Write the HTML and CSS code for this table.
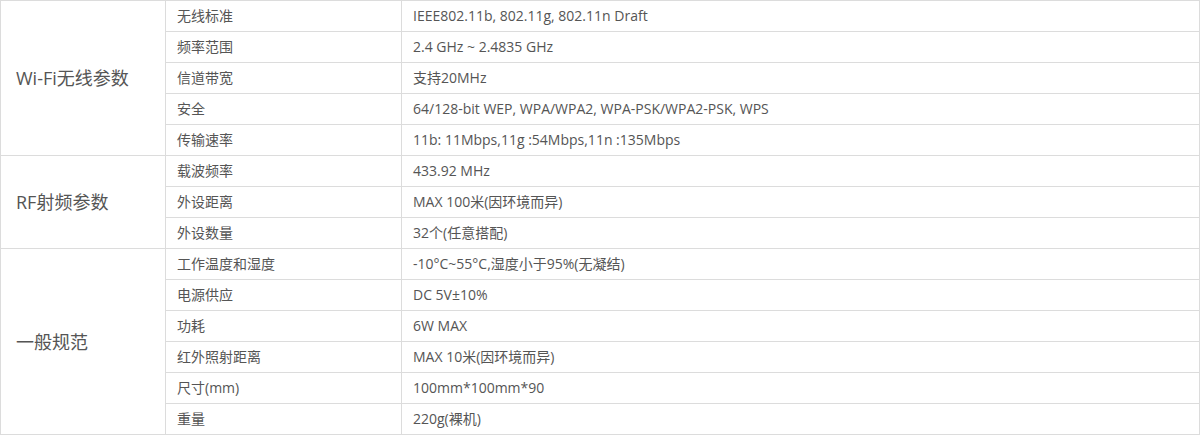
FILE: index.html
```html
<!DOCTYPE html>
<html lang="zh-CN">
<head>
<meta charset="utf-8">
<title>规格参数</title>
<link rel="stylesheet" href="styles.css">
</head>
<body>
<table class="spec">
  <colgroup>
    <col class="c-group">
    <col class="c-name">
    <col class="c-value">
  </colgroup>
  <tbody>
    <tr><td class="group" rowspan="5">Wi-Fi无线参数</td><td>无线标准</td><td>IEEE802.11b, 802.11g, 802.11n Draft</td></tr>
    <tr><td>频率范围</td><td>2.4 GHz ~ 2.4835 GHz</td></tr>
    <tr><td>信道带宽</td><td>支持20MHz</td></tr>
    <tr><td>安全</td><td>64/128-bit WEP, WPA/WPA2, WPA-PSK/WPA2-PSK, WPS</td></tr>
    <tr><td>传输速率</td><td>11b: 11Mbps,11g :54Mbps,11n :135Mbps</td></tr>
    <tr><td class="group" rowspan="3">RF射频参数</td><td>载波频率</td><td>433.92 MHz</td></tr>
    <tr><td>外设距离</td><td>MAX 100米(因环境而异)</td></tr>
    <tr><td>外设数量</td><td>32个(任意搭配)</td></tr>
    <tr><td class="group" rowspan="6">一般规范</td><td>工作温度和湿度</td><td>-10°C~55°C,湿度小于95%(无凝结)</td></tr>
    <tr><td>电源供应</td><td>DC 5V±10%</td></tr>
    <tr><td>功耗</td><td>6W MAX</td></tr>
    <tr><td>红外照射距离</td><td>MAX 10米(因环境而异)</td></tr>
    <tr><td>尺寸(mm)</td><td>100mm*100mm*90</td></tr>
    <tr><td>重量</td><td>220g(裸机)</td></tr>
  </tbody>
</table>
</body>
</html>
```

FILE: styles.css
```css
html, body {
  margin: 0;
  padding: 0;
  background: #fff;
}

.spec {
  border-collapse: collapse;
  width: 1200px;
  table-layout: fixed;
  font-family: "Open Sans", "Noto Sans CJK SC", sans-serif;
  font-size: 14px;
  color: #555;
}

.c-group { width: 165px; }
.c-name { width: 236px; }

.spec td {
  border: 1px solid #dcdcdc;
  height: 30px;
  padding: 0 0 0 11px;
  line-height: 30px;
  vertical-align: middle;
  white-space: nowrap;
}

.spec td.group {
  font-size: 18px;
  padding-left: 15px;
}
```
